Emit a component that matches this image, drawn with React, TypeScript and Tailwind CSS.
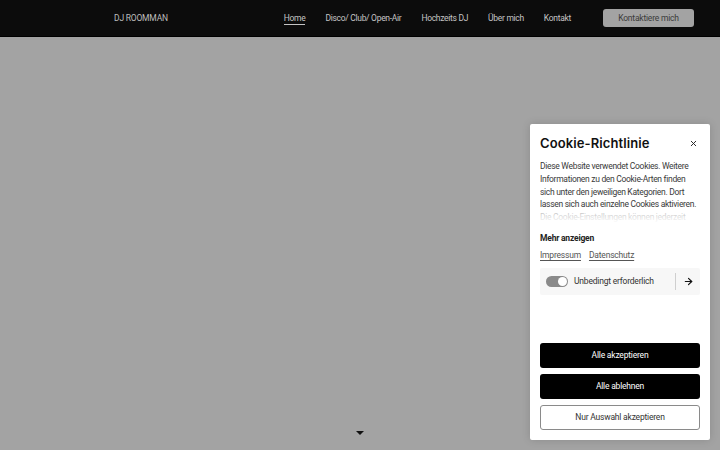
import { X, ArrowRight } from "lucide-react";

const nav = ["Home", "Disco/ Club/ Open-Air", "Hochzeits DJ", "Über mich", "Kontakt"];

function Header() {
    return (
        <header className="h-[37px] bg-[#0c0c0c] border-b border-[#000] flex items-center">
            <div className="w-full flex items-center pl-[114px] pr-[26px]">
                <span className="text-[8.5px] text-[#bdbdbd] tracking-[-0.2px]">DJ ROOMMAN</span>
                <nav className="ml-auto flex items-center gap-[20px] mr-[32px]">
                    {nav.map((item, i) => (
                        <a
                            key={item}
                            className={`text-[8.5px] leading-[12px] tracking-[-0.3px] text-[#c4c4c4] ${i === 0 ? "border-b border-[#c4c4c4] pt-[1px]" : ""}`}
                        >
                            {item}
                        </a>
                    ))}
                </nav>
                <button className="w-[91px] h-[18px] rounded-[3px] bg-[#a3a3a3] text-[8.5px] tracking-[-0.2px] text-[#3b3b3b]">
                    Kontaktiere mich
                </button>
            </div>
        </header>
    );
}

function CookieDialog() {
    return (
        <div className="absolute left-[530px] top-[124px] w-[180px] h-[316px] bg-white rounded-[2px] shadow-[0_0_8px_rgba(0,0,0,0.15)] px-[10px] pt-[10px] flex flex-col">
            <div className="flex items-start justify-between">
                <h2 className="text-[13px] font-semibold text-[#111] leading-[18px] tracking-[0.1px]" style={{ fontFamily: "Inter, sans-serif" }}>
                    Cookie-Richtlinie
                </h2>
                <X className="w-[9px] h-[9px] mt-[5px] mr-[2px] text-[#222]" strokeWidth={2.5} />
            </div>
            <div className="relative mt-[8px] h-[63px] overflow-hidden">
                <p className="text-[8.5px] leading-[12.75px] tracking-[-0.3px] text-[#3a3a3a]">
                    Diese Website verwendet Cookies. Weitere Informationen zu den Cookie-Arten finden sich unter den jeweiligen Kategorien. Dort lassen sich auch einzelne Cookies aktivieren. Die Cookie-Einstellungen können jederzeit geändert werden.
                </p>
                <div className="absolute left-0 right-0 bottom-0 h-[14px] bg-gradient-to-b from-white/60 to-white" />
            </div>
            <div className="mt-[9px] text-[8.5px] font-bold tracking-[-0.2px] text-[#222] leading-[12px]">Mehr anzeigen</div>
            <div className="mt-[5px] flex gap-[8px] text-[8.5px] tracking-[-0.2px] text-[#555] leading-[12px]">
                <a className="underline underline-offset-2">Impressum</a>
                <a className="underline underline-offset-2">Datenschutz</a>
            </div>
            <div className="mt-[7px] h-[27px] bg-[#f7f7f7] rounded-[2px] flex items-center pl-[6px] pr-[6px]">
                <div className="w-[22px] h-[11px] rounded-full bg-[#8a8a8a] relative">
                    <div className="absolute right-[1px] top-[1px] w-[9px] h-[9px] rounded-full bg-white" />
                </div>
                <span className="ml-[6px] text-[8.5px] tracking-[-0.2px] text-[#333]">Unbedingt erforderlich</span>
                <div className="ml-auto w-px h-[17px] bg-[#cfcfcf]" />
                <ArrowRight className="ml-[7px] w-[11px] h-[11px] text-[#111]" strokeWidth={2.5} />
            </div>
            <div className="mt-auto mb-[10px] flex flex-col gap-[6px] text-[8.5px] tracking-[-0.2px]">
                <button className="h-[25px] rounded-[3px] bg-black text-white">Alle akzeptieren</button>
                <button className="h-[25px] rounded-[3px] bg-black text-white">Alle ablehnen</button>
                <button className="h-[25px] rounded-[3px] bg-white border border-[#8a8a8a] text-[#333]">Nur Auswahl akzeptieren</button>
            </div>
        </div>
    );
}

export default function App() {
    return (
        <div className="relative w-[720px] h-[450px] bg-[#a3a3a3] overflow-hidden" style={{ fontFamily: "Roboto, sans-serif" }}>
            <Header />
            <div className="absolute left-[356px] top-[431px] w-0 h-0 border-l-[4px] border-r-[4px] border-t-[4px] border-l-transparent border-r-transparent border-t-[#111]" />
            <CookieDialog />
        </div>
    );
}
